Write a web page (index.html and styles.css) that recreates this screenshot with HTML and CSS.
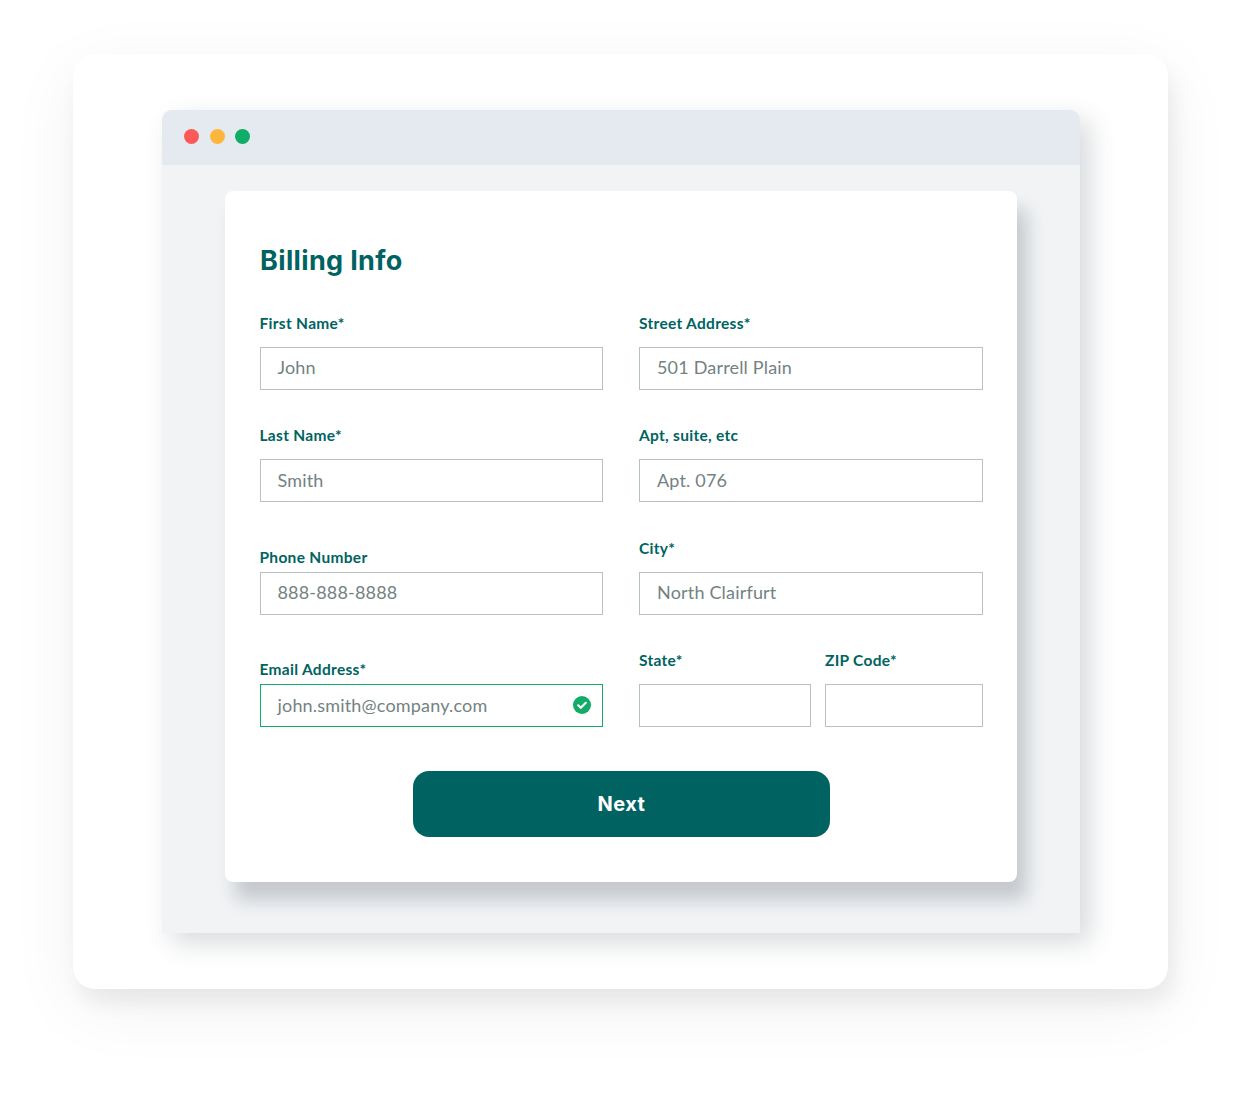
FILE: index.html
```html
<!DOCTYPE html>
<html lang="en">
<head>
<meta charset="utf-8">
<title>Billing Info</title>
<link rel="stylesheet" href="styles.css">
</head>
<body>
<main class="panel">
  <section class="window">
    <header class="titlebar">
      <span class="dot dot-red"></span>
      <span class="dot dot-yellow"></span>
      <span class="dot dot-green"></span>
    </header>
    <div class="window-body">
      <form class="card">
        <h1 class="title">Billing Info</h1>
        <div class="grid">
          <div class="field"><div class="label">First Name*</div><div class="input">John</div></div>
          <div class="field"><div class="label">Street Address*</div><div class="input">501 Darrell Plain</div></div>
          <div class="field"><div class="label">Last Name*</div><div class="input">Smith</div></div>
          <div class="field"><div class="label">Apt, suite, etc</div><div class="input">Apt. 076</div></div>
          <div class="field"><div class="label label-tight">Phone Number</div><div class="input">888-888-8888</div></div>
          <div class="field"><div class="label">City*</div><div class="input">North Clairfurt</div></div>
          <div class="field"><div class="label label-tight">Email Address*</div>
            <div class="input input-valid">john.smith@company.com
              <svg class="check" viewBox="0 0 18 18" aria-hidden="true"><circle cx="9" cy="9" r="9" fill="#12ab68"/><path d="M5.2 9.3l2.6 2.5 5-5" fill="none" stroke="#fff" stroke-width="2.1" stroke-linecap="round" stroke-linejoin="round"/></svg>
            </div>
          </div>
          <div class="split">
            <div class="field"><div class="label">State*</div><div class="input"></div></div>
            <div class="field"><div class="label">ZIP Code*</div><div class="input"></div></div>
          </div>
        </div>
        <div class="actions"><button class="next" type="button">Next</button></div>
      </form>
    </div>
  </section>
</main>
</body>
</html>
```
FILE: styles.css
```css
* { box-sizing: border-box; }
html, body { margin: 0; background: #fff; }
body {
  height: 1094px;
  padding: 54px 86px 105px 73px;
  font-family: "Lato", "Noto Sans", sans-serif;
  overflow: hidden;
}
.panel {
  width: 1095px;
  height: 935px;
  padding: 56px 88px 56px 89px;
  background: #fff;
  border-radius: 22px;
  box-shadow: 6px 14px 20px rgba(0,0,0,.06), 0 18px 70px rgba(0,0,0,.06);
}
.window {
  height: 823px;
  display: flex;
  flex-direction: column;
  background: #f1f3f5;
  border-radius: 10px 10px 0 0;
  box-shadow: 10px 10px 26px rgba(60,70,85,.2);
}
.titlebar {
  height: 55px;
  flex: none;
  display: flex;
  align-items: center;
  gap: 10.5px;
  padding: 0 0 3px 22px;
  background: #e5eaf1;
  border-radius: 10px 10px 0 0;
}
.dot { width: 15px; height: 15px; border-radius: 50%; }
.dot-red { background: #fb5a57; }
.dot-yellow { background: #fdb63c; }
.dot-green { background: #10ad68; }
.window-body { padding: 26px 63px 51px; flex: 1; }
.card {
  height: 691px;
  padding: 52.5px 35px 0;
  background: #fff;
  border-radius: 8px;
  box-shadow: 10px 18px 18px rgba(40,55,70,.22);
}
.title {
  margin: 0;
  height: 34px;
  font: 700 27px/34px "Inter", "Open Sans", sans-serif;
  letter-spacing: .35px;
  color: #006361;
}
.grid {
  margin: 34.1px 0 0 -.5px;
  display: grid;
  grid-template-columns: 343.5px 343.5px;
  column-gap: 36px;
  grid-auto-rows: 78px;
  row-gap: 34.5px;
}
.split { display: grid; grid-template-columns: 172px 157.5px; column-gap: 14px; }
.field { display: flex; flex-direction: column; justify-content: flex-end; }
.label {
  height: 18px;
  margin-bottom: 15px;
  font-size: 15.5px;
  font-weight: 700;
  line-height: 18px;
  letter-spacing: .3px;
  color: #006361;
}
.label-tight { margin-bottom: 6px; }
.input {
  height: 43px;
  display: flex;
  align-items: center;
  justify-content: space-between;
  padding: 0 11px 2px 17px;
  border: 1px solid #b6c1c1;
  font-size: 18px;
  letter-spacing: .18px;
  color: #738282;
  background: #fff;
}
.input-valid { border-color: #12ab68; }
.check { width: 18px; height: 18px; flex: none; }
.actions { margin-top: 43.5px; padding-left: 1px; display: flex; justify-content: center; }
.next {
  width: 417px;
  height: 66px;
  padding: 1px 0 0;
  border: 0;
  border-radius: 16px;
  background: #006361;
  color: #fff;
  font: 700 20px "Inter", "Open Sans", sans-serif;
  letter-spacing: .45px;
}
```
